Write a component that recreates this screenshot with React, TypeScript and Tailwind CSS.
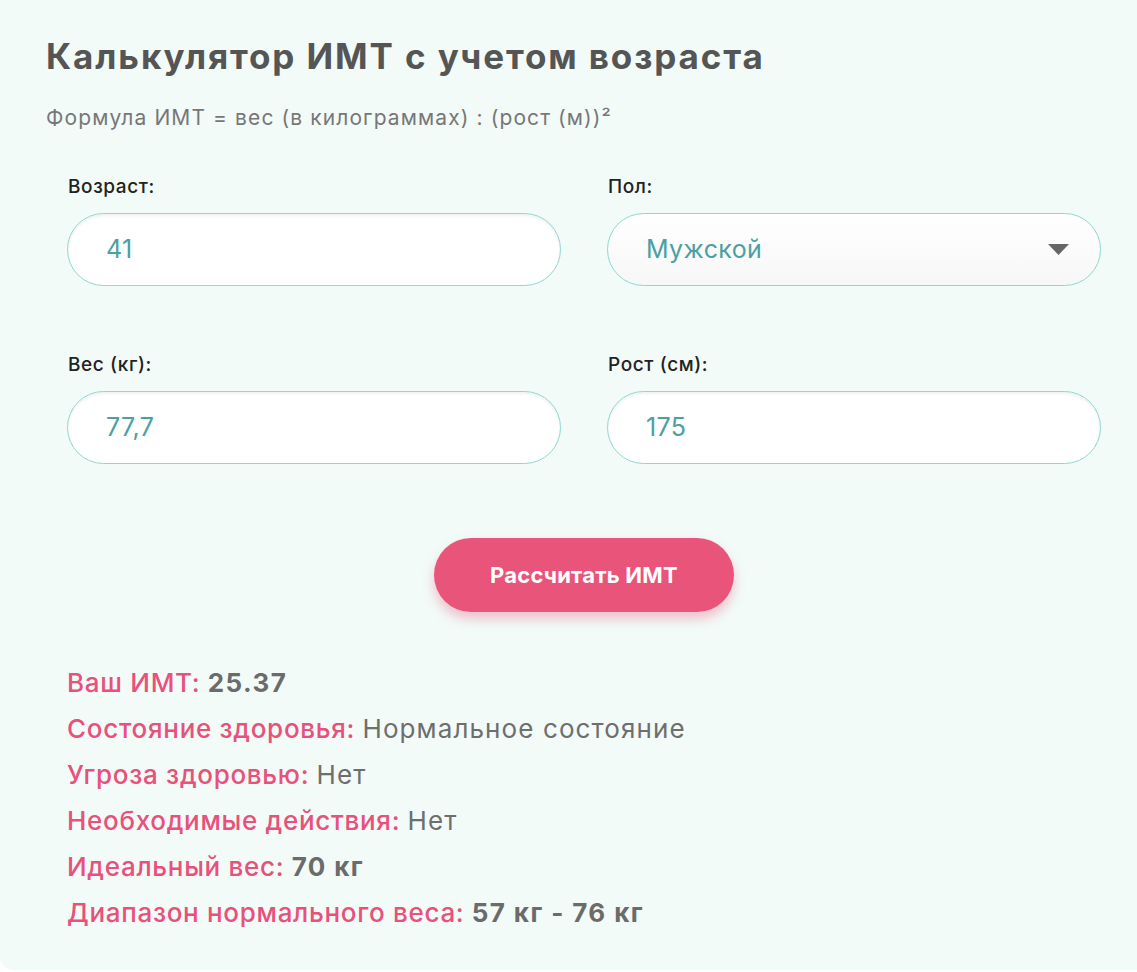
import React from "react";

const font = { fontFamily: "Inter, 'Noto Sans', sans-serif" };

function Field({ label, value }: { label: string; value: string }) {
	return (
		<div className="flex flex-col">
			<label className="text-[19px] leading-[24px] font-medium tracking-[0.6px] text-[#222222] mb-[14px] pl-px">
				{label}
			</label>
			<div className="h-[73px] rounded-full border border-[#8fd8cf] bg-white shadow-[inset_0_2px_3px_rgba(0,0,0,0.06)] flex items-center pl-[38px]">
				<span className="text-[25px] tracking-[0.4px] text-[#4aa0a3]">{value}</span>
			</div>
		</div>
	);
}

function SelectField({ label, value }: { label: string; value: string }) {
	return (
		<div className="flex flex-col">
			<label className="text-[19px] leading-[24px] font-medium tracking-[0.6px] text-[#222222] mb-[14px] pl-px">
				{label}
			</label>
			<div className="h-[73px] rounded-full border border-[#8fd8cf] bg-gradient-to-b from-white to-[#f7f7f7] flex items-center justify-between pl-[38px] pr-[31px]">
				<span className="text-[25px] tracking-[0.4px] text-[#4aa0a3]">{value}</span>
				<svg width="21" height="11" viewBox="0 0 21 11">
					<polygon points="0,0 21,0 10.5,11" fill="#666666" />
				</svg>
			</div>
		</div>
	);
}

const results: { label: string; value: string; bold?: boolean }[] = [
	{ label: "Ваш ИМТ:", value: "25.37", bold: true },
	{ label: "Состояние здоровья:", value: "Нормальное состояние" },
	{ label: "Угроза здоровью:", value: "Нет" },
	{ label: "Необходимые действия:", value: "Нет" },
	{ label: "Идеальный вес:", value: "70 кг", bold: true },
	{ label: "Диапазон нормального веса:", value: "57 кг - 76 кг", bold: true },
];

export default function App() {
	return (
		<div className="bg-white min-h-[972px]" style={font}>
			<div className="bg-[#f2fbf8] rounded-bl-[14px] h-[970px] pt-[36px] pl-[46px] pr-[36px]">
				<h1 className="text-[35px] leading-[40px] font-bold text-[#555555] tracking-[1.9px]">
					Калькулятор ИМТ с учетом возраста
				</h1>
				<p className="mt-[28px] text-[21px] leading-[28px] tracking-[1.1px] text-[#777777]">
					Формула ИМТ = вес (в килограммах) : (рост (м))²
				</p>

				<div className="mt-[43px] pl-[21px] pr-0 w-[1055px]">
					<div className="grid grid-cols-2 gap-x-[46px] gap-y-[67px]">
						<Field label="Возраст:" value="41" />
						<SelectField label="Пол:" value="Мужской" />
						<Field label="Вес (кг):" value="77,7" />
						<Field label="Рост (см):" value="175" />
					</div>

					<div className="flex justify-center mt-[74px]">
						<button className="w-[300px] h-[74px] rounded-full bg-[#e9547a] text-white text-[22px] font-bold tracking-[0.2px] shadow-[0_7px_12px_rgba(233,84,122,0.35)]">
							Рассчитать ИМТ
						</button>
					</div>

					<div className="mt-[48px] flex flex-col">
						{results.map((r) => (
							<div key={r.label} className="text-[26px] leading-[46px]">
								<span className="font-medium tracking-[0.7px] text-[#e9507a]">{r.label}</span>{" "}
								<span
									className={
										r.bold
											? "font-bold tracking-[1.4px] text-[#6b6b6b]"
											: "tracking-[1.1px] text-[#6e6e6e]"
									}
								>
									{r.value}
								</span>
							</div>
						))}
					</div>
				</div>
			</div>
		</div>
	);
}
